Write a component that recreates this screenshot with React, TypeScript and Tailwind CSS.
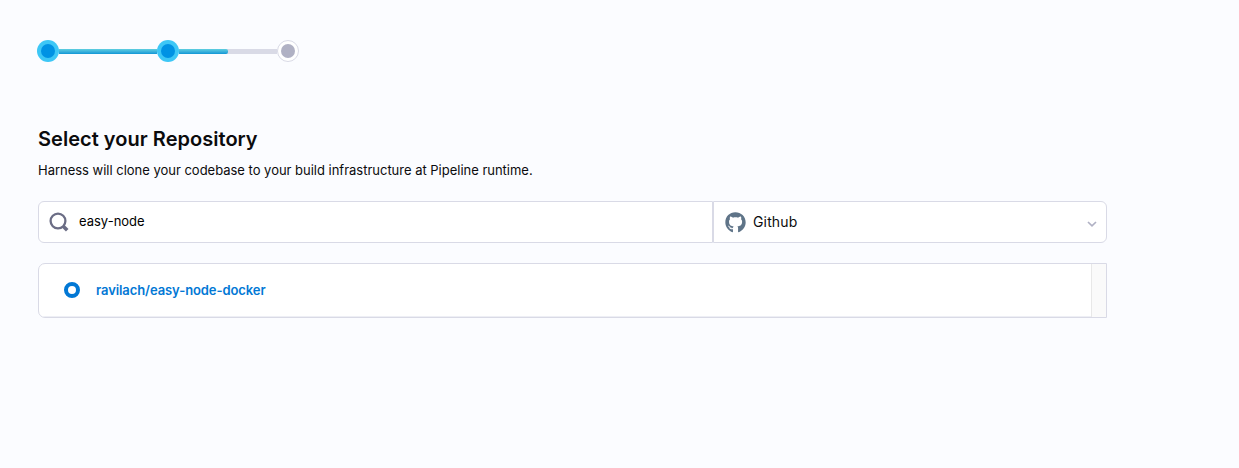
import { useState } from 'react';
import { FaGithub } from 'react-icons/fa';

function DoneStep() {
  return (
    <div className="flex size-[22px] shrink-0 items-center justify-center rounded-full bg-[#3dc7f6]">
      <div className="size-[14px] rounded-full bg-[#0092e4]" />
    </div>
  );
}

function Stepper() {
  return (
    <div className="-ml-px flex h-[22px] items-center">
      <DoneStep />
      <div className="mt-px h-[5px] w-[98px] bg-linear-to-b from-[#5fcfe0] to-[#0b96d6]" />
      <DoneStep />
      <div className="mt-px flex h-[5px] w-[98px] bg-[#d9dae6]">
        <div className="w-[49px] rounded-r-[2px] bg-linear-to-b from-[#5fcfe0] to-[#0b96d6]" />
      </div>
      <div className="flex size-[22px] shrink-0 items-center justify-center rounded-full border border-[#d9dae6] bg-white">
        <div className="size-[14px] rounded-full bg-[#b0b1c4]" />
      </div>
    </div>
  );
}

export default function App() {
  const [query, setQuery] = useState('easy-node');

  return (
    <main className="h-[468px] w-full bg-[#fbfcff] pt-10 pl-[38px] font-['Inter',sans-serif] text-[#0b0b0d]">
      <Stepper />
      <h1 className="mt-[63px] text-[20px] leading-7 font-semibold tracking-[0.03px]">Select your Repository</h1>
      <p className="mt-[7px] text-[13px] leading-5 tracking-[-0.015px]">
        Harness will clone your codebase to your build infrastructure at Pipeline runtime.
      </p>

      <div className="mt-[21px] flex h-[42px] w-[1069px]">
        <label className="flex w-[675px] items-center rounded-l-[6px] border border-[#d9dae6] bg-white pl-[10px]">
          <svg className="size-5 shrink-0" viewBox="0 0 20 20" fill="none" stroke="#6b6d85">
            <circle cx="9" cy="9" r="7.4" strokeWidth="2.3" />
            <path d="M14 14L18.2 18.2" strokeWidth="3.6" />
          </svg>
          <input
            className="mb-[2px] ml-[10px] h-5 w-[600px] bg-transparent text-[13px] text-black outline-none"
            value={query}
            onChange={(event) => setQuery(event.target.value)}
          />
        </label>
        <button className="flex w-[394px] items-center rounded-r-[6px] border border-[#d9dae6] bg-white pr-[9px] pl-[11px]">
          <FaGithub className="size-[21px] text-[#5f7488]" />
          <span className="ml-[7px] text-[14px] leading-5 tracking-[0.15px]">Github</span>
          <svg className="mt-[3px] ml-auto h-[6px] w-[10px]" viewBox="0 0 10 6" fill="none" stroke="#b0b1c4" strokeWidth="1.7">
            <path d="M1 1L5 4.8L9 1" />
          </svg>
        </button>
      </div>

      <div className="mt-5 flex h-[55px] w-[1069px] overflow-hidden rounded-l-[7px] border border-[#d9dae6] bg-white">
        <div className="flex flex-1 items-center border-b border-[#eeeff5] pl-[25px]">
          <span className="size-4 rounded-full border-4 border-[#0278d5]" />
          <span className="ml-4 text-[13px] leading-5 font-semibold tracking-[-0.08px] text-[#0278d5]">ravilach/easy-node-docker</span>
        </div>
        <div className="w-[15px] border-l border-[#e8e8e8] bg-[#fafafa]" />
      </div>
    </main>
  );
}
